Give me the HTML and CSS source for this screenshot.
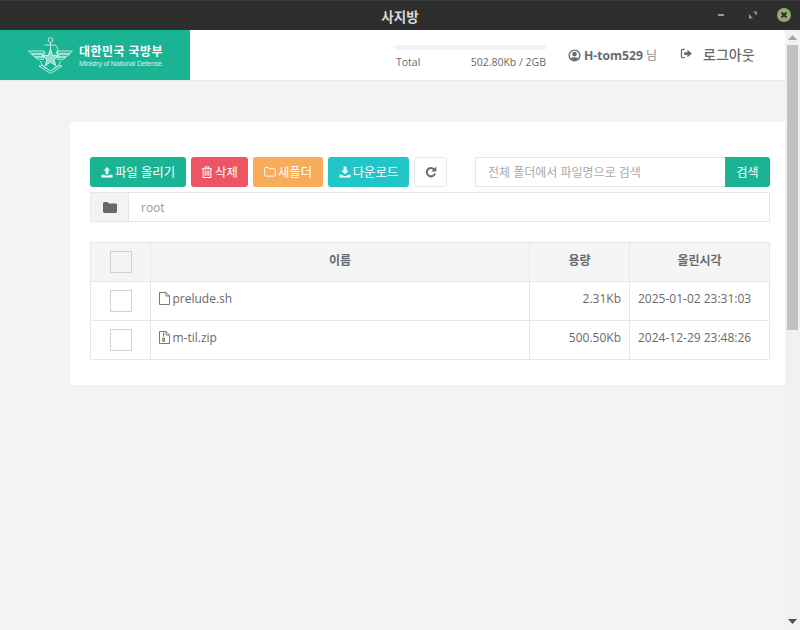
FILE: index.html
```html
<!DOCTYPE html>
<html lang="ko">
<head>
<meta charset="utf-8">
<title>사지방</title>
<link rel="stylesheet" href="styles.css">
</head>
<body>
<div class="window">
  <div class="titlebar">
    <span class="title">사지방</span>
    <div class="winctl">
      <svg class="ctl" viewBox="0 0 14 14"><rect x="3" y="6" width="6" height="2" fill="#9a9a9a"/></svg>
      <svg class="ctl" viewBox="0 0 14 14"><path d="M7 3.500h4v4zM3 6l4 4.500H3z" fill="#9a9a9a"/></svg>
      <svg class="ctl close" viewBox="0 0 14 14"><circle cx="7" cy="7" r="7" fill="#8fae6f"/><path d="M4.500 4.500l5 5M9.500 4.500l-5 5" stroke="#2b2b2b" stroke-width="1.800"/></svg>
    </div>
  </div>
  <div class="viewport">
    <div class="page">
      <header class="topbar">
        <div class="logo">
          <svg class="emblem" viewBox="0 0 45 37" fill="none" stroke="#e8f7f3" stroke-width=".8">
            <path d="M.5 14H16l1 2.300H3zM3.500 17.300H15.500l1 2H6zM7 20.300H15l.5 2H10zM44.500 14H29l-1 2.300h14zM41.500 17.300H29.500l-1 2H39zM38 20.300H30l-.5 2H35z"/>
            <circle cx="22.500" cy="3" r="2.300"/>
            <path d="M22.500 5.300V13M16.500 8h10.500c2.500 1 3.500 4.500 2.500 8"/>
            <path d="M22.500 12l2.200 6.300 6.300.2-5 4 1.800 6.300-5.300-3.700-5.300 3.700 1.800-6.300-5-4 6.300-.2z" fill="#e8f7f3" fill-opacity=".6"/>
            <path d="M12.500 24c1 4 3.500 6.500 7 7.500M32.500 24c-1 4-3.500 6.500-7 7.500"/>
            <path d="M11 29l11.500 7.500L34 29l-3-.5-8.500 5.500-8.500-5.500z"/>
          </svg>
          <div class="logo-text">
            <div class="logo-ko">대한민국 국방부</div>
            <div class="logo-en">Ministry of National Defense</div>
          </div>
        </div>
        <div class="usage">
          <div class="bar"></div>
          <div class="usage-row"><span>Total</span><span>502.80Kb / 2GB</span></div>
        </div>
        <div class="user">
          <svg class="user-icon" viewBox="0 0 14 14"><circle cx="7" cy="7" r="5.800" fill="none" stroke="#676a6c" stroke-width="1.500"/><circle cx="7" cy="5.500" r="2.500" fill="#676a6c"/><path d="M3 10.500c1-2 7-2 8 0L7 12.500z" fill="#676a6c"/></svg>
          <b class="uname">H-tom529</b><span class="nim">님</span>
        </div>
        <div class="logout">
          <svg class="logout-icon" viewBox="0 0 14 12"><path d="M5 1.500H2.500A1 1 0 0 0 1.500 2.500v7a1 1 0 0 0 1 1H5" fill="none" stroke="#676a6c" stroke-width="1.400"/><path d="M4.500 4.500h3.500V2l5 4-5 4V7.500H4.500z" fill="#676a6c"/></svg>
          <span>로그아웃</span>
        </div>
      </header>
      <main class="content">
        <section class="panel">
          <div class="toolbar">
            <button class="btn green"><svg class="ic" viewBox="0 0 13 13"><path d="M6.500 1L10 5H8v4H5V5H3zM.5 9.500h3.500v.8h5v-.8h3.500v3H.5z" fill="#fff"/></svg>파일 올리기</button>
            <button class="btn red"><svg class="ic" viewBox="0 0 13 13" fill="none" stroke="#fff" stroke-width="1.100"><path d="M1 3h11M4.500 3V1h4v2M2.300 3v9.500h8.400V3M4.500 5v5.500M8.500 5v5.500M6.500 5v5.500"/></svg>삭제</button>
            <button class="btn orange"><svg class="ic" viewBox="0 0 13 13"><path d="M.7 2.500c0-.5.400-.9.900-.9h3.100l1 1.300h5.700c.5 0 .9.400.9.900v6.300c0 .5-.4.900-.9.900H1.600c-.5 0-.9-.4-.9-.9z" fill="none" stroke="#fff" stroke-width="1"/></svg>새폴더</button>
            <button class="btn cyan"><svg class="ic" viewBox="0 0 13 13"><path d="M5 .5h3v4.500h2.500L6.500 9 2.500 5H5zM.5 9.500h3l1.300 1.200h3.400l1.300-1.200h3v3H.5z" fill="#fff"/></svg>다운로드</button>
            <button class="btn refresh"><svg class="ic-r" viewBox="0 0 12 12"><path d="M10 7.500A4.200 4.200 0 1 1 9 3.200" fill="none" stroke="#676a6c" stroke-width="2"/><path d="M11.300.5v5H6.300z" fill="#676a6c"/></svg></button>
            <div class="search">
              <input class="search-input" type="text" placeholder="전체 폴더에서 파일명으로 검색">
              <button class="search-btn">검색</button>
            </div>
          </div>
          <div class="crumb">
            <span class="crumb-icon"><svg viewBox="0 0 14 11"><path d="M0 1.500C0 .7.600 0 1.400 0h3.200l1.300 1.500h6.700c.8 0 1.400.6 1.400 1.400v6.700c0 .8-.6 1.400-1.400 1.400H1.400C.6 11 0 10.400 0 9.600z" fill="#676a6c"/></svg></span>
            <span class="crumb-path">root</span>
          </div>
          <table class="files">
            <colgroup><col class="c-check"><col><col class="c-size"><col class="c-time"></colgroup>
            <thead>
              <tr><th><span class="check"></span></th><th>이름</th><th>용량</th><th>올린시각</th></tr>
            </thead>
            <tbody>
              <tr>
                <td class="ctr"><span class="check"></span></td>
                <td><svg class="file" viewBox="0 0 11 13" fill="none" stroke="#676a6c" stroke-width=".9"><path d="M.5.500h6.500l3.500 3.500v8.500H.5zM7 .5V4h3.500"/></svg>prelude.sh</td>
                <td class="num">2.31Kb</td>
                <td>2025-01-02 23:31:03</td>
              </tr>
              <tr>
                <td class="ctr"><span class="check"></span></td>
                <td><svg class="file" viewBox="0 0 11 13" fill="none" stroke="#676a6c" stroke-width=".9"><path d="M.5.500h6.500l3.500 3.500v8.500H.5zM7 .5V4h3.500"/><path d="M4.500 1.500v4M3.800 7h1.500v3.500H3.800z" stroke-width="1"/></svg>m-til.zip</td>
                <td class="num">500.50Kb</td>
                <td>2024-12-29 23:48:26</td>
              </tr>
            </tbody>
          </table>
        </section>
      </main>
    </div>
    <div class="scrollbar">
      <svg class="arrow" viewBox="0 0 9 5"><path d="M4.500 0L9 5H0z" fill="#a3a3a3"/></svg>
      <div class="track"><div class="thumb"></div></div>
      <svg class="arrow" viewBox="0 0 9 5"><path d="M0 0h9L4.500 5z" fill="#505050"/></svg>
    </div>
  </div>
</div>
</body>
</html>
```
FILE: styles.css
```css
* { box-sizing: border-box; }
html, body { margin: 0; height: 100%; overflow: hidden; }
body {
  font-family: "Open Sans", "Noto Sans CJK KR", sans-serif;
  font-size: 13px;
  color: #676a6c;
}
.window { display: flex; flex-direction: column; height: 630px; width: 800px; }

.titlebar {
  height: 30px;
  flex: none;
  background: #2e2e2e;
  border-top: 1px solid #3a3a3a;
  position: relative;
  display: flex;
  align-items: center;
  justify-content: center;
}
.title { color: #d8d8d8; font-size: 13.500px; font-weight: 700; }
.winctl {
  position: absolute;
  right: 9px;
  top: 7px;
  display: flex;
  gap: 17px;
}
.ctl { width: 14px; height: 14px; display: block; }

.viewport { flex: 1; display: flex; min-height: 0; background: #f3f3f4; }
.page { flex: 1; min-width: 0; display: flex; flex-direction: column; }

.topbar {
  height: 51px;
  flex: none;
  display: flex;
  background: #fff;
  border-bottom: 1px solid #e7eaec;
  align-items: stretch;
}
.logo {
  width: 190px;
  height: 50px;
  background: #1ab394;
  display: flex;
  align-items: center;
  padding-left: 28px;
  gap: 6px;
  color: #fff;
}
.emblem { width: 45px; height: 37px; flex: none; margin-top: 1px; }
.logo-text { margin-top: 1px; }
.logo-ko { font-size: 12px; font-weight: 700; line-height: 15px; letter-spacing: .45px; white-space: nowrap; }
.logo-en { font-size: 7px; line-height: 9px; white-space: nowrap; color: #d6f2eb; font-family: "Liberation Sans", sans-serif; letter-spacing: -.17px; }

.usage { width: 151px; margin-left: 205px; padding-top: 15px; }
.bar { height: 5px; background: #f3f3f4; border-radius: 3px; }
.usage-row {
  display: flex;
  justify-content: space-between;
  font-size: 10.500px;
  line-height: 15px;
  margin-top: 5px;
  padding-left: 1px;
}
.user {
  margin-left: 22px;
  display: flex;
  align-items: center;
  font-size: 12.500px;
}
.user-icon { width: 13px; height: 13px; margin-right: 3px; }
.uname { font-size: 12.200px; }
.nim { font-weight: 400; margin-left: 3px; font-size: 12px; color: #8a8a8a; }
.logout {
  margin-left: 23px;
  display: flex;
  align-items: center;
  font-size: 14px;
  font-weight: 500;
  padding-bottom: 3px;
}
.logout-icon { width: 13px; height: 11px; margin-right: 10px; }

.content { padding: 40px 0 0 70px; }
.panel { background: #fff; padding: 35px 15px 25px 20px; border-top: 1px solid #eef0f1; height: 264px; }

.toolbar { display: flex; align-items: stretch; height: 30px; gap: 5px; }
.btn {
  height: 30px;
  border: 0;
  border-radius: 3px;
  color: #fff;
  padding: 0;
  font: inherit;
  font-size: 12.400px;
  display: flex;
  align-items: center;
  justify-content: center;
  gap: 2px;
}
.ic { width: 12px; height: 12px; }
.green { background: #1ab394; width: 96px; }
.red { background: #ed5565; width: 57px; }
.orange { background: #f8ac59; width: 70px; }
.cyan { background: #23c6c8; width: 81px; }
.refresh { background: #fff; border: 1px solid #e7eaec; width: 33px; }
.ic-r { width: 12px; height: 12px; }

.search { margin-left: 23px; flex: 1; display: flex; }
.search-input {
  flex: 1;
  min-width: 0;
  border: 1px solid #e5e6e7;
  border-right: 0;
  border-radius: 2px 0 0 2px;
  padding: 1px 12px 0;
  font: inherit;
  font-size: 12px;
  outline: 0;
}
.search-input::placeholder { color: #a9a9a9; opacity: 1; }
.search-btn {
  width: 45px;
  border: 0;
  background: #1ab394;
  color: #fff;
  font: inherit;
  font-size: 12px;
  padding: 0;
  border-radius: 0 3px 3px 0;
}

.crumb {
  margin-top: 5px;
  height: 30px;
  display: flex;
  border: 1px solid #e5e6e7;
}
.crumb-icon {
  width: 38px;
  background: #f3f3f4;
  border-right: 1px solid #e5e6e7;
  display: flex;
  align-items: center;
  justify-content: center;
}
.crumb-icon svg { width: 14px; height: 11px; }
.crumb-path { padding-left: 12px; line-height: 30px; font-size: 12px; color: #999; }

.files {
  margin-top: 20px;
  width: 680px;
  border-collapse: collapse;
  table-layout: fixed;
}
.c-check { width: 60px; }
.c-size { width: 100px; }
.c-time { width: 140px; }
.files th, .files td { border: 1px solid #e7e7e7; padding: 0 8px; font-size: 12px; }
.files th { height: 39px; background: #f5f5f6; text-align: center; font-weight: 600; padding-bottom: 5px; }
.files td { height: 39px; padding-bottom: 5px; }
.files td.ctr { text-align: center; padding: 0; }
.files td.num { text-align: right; }
.files th:first-child { padding: 0; }
.check {
  display: block;
  width: 22px;
  height: 22px;
  margin: 0 auto;
  border: 1px solid #d5d0ca;
  background: transparent;
}
.file { width: 11px; height: 13px; margin-right: 2.500px; vertical-align: -2px; }

.scrollbar {
  width: 15px;
  flex: none;
  background: #f1f1f1;
  display: flex;
  flex-direction: column;
  align-items: center;
  padding: 5px 0 6px;
}
.arrow { width: 9px; height: 5px; flex: none; }
.track { flex: 1; width: 100%; padding-top: 5px; }
.thumb { width: 11px; margin-left: 2px; height: 285px; background: #c1c1c1; }
```
